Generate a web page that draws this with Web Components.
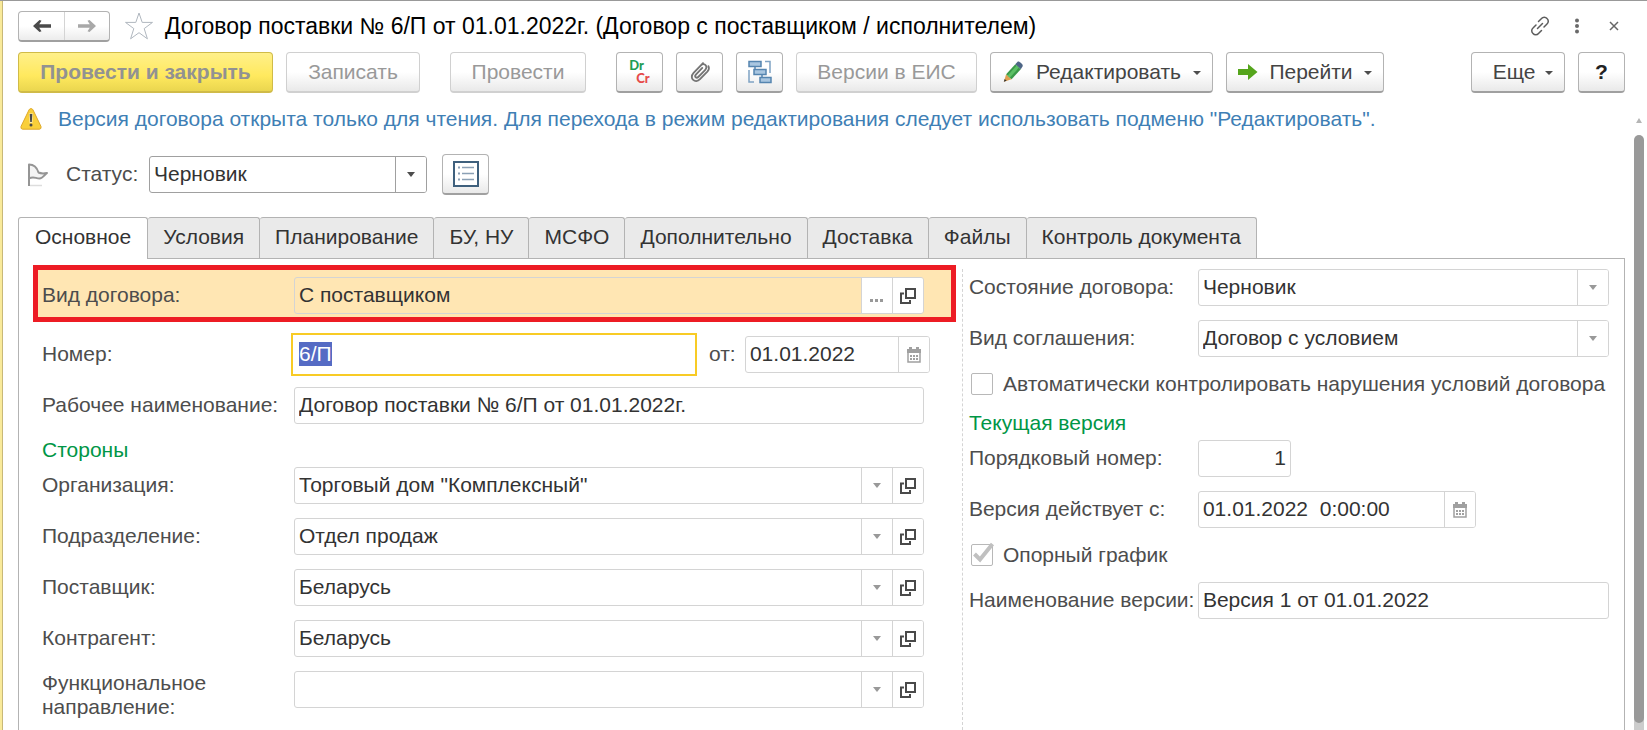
<!DOCTYPE html>
<html lang="ru">
<head>
<meta charset="utf-8">
<title>Договор поставки № 6/П от 01.01.2022г.</title>
<style>
  html, body { margin: 0; height: 100%; background: #fff; }
  body { font: 21px/24px "Liberation Sans", Arial, sans-serif; color: #4d4d4d; overflow: hidden; }
</style>
</head>
<body>
<contract-window></contract-window>

<script>
const ICONS = {
  back: '<svg width="18" height="12" viewBox="0 0 18 12"><path d="M0 6 6.500 0l2 .8-2.300 3.400H18v3.600H6.200l2.300 3.400-2 .8z" fill="#4a4a4a"/></svg>',
  forward: '<svg width="18" height="12" viewBox="0 0 18 12"><path d="M18 6 11.500 0l-2 .8 2.300 3.400H0v3.600h11.800l-2.300 3.400 2 .8z" fill="#a8a8a8"/></svg>',
  star: '<svg width="30" height="30" viewBox="0 0 30 30"><path d="M15 2l3.200 9.400h10.300l-8.300 6.200 3.200 10.200L15 21.700l-8.400 6.100 3.200-10.200-8.300-6.200h10.300z" fill="#fff" stroke="#b0b7bf" stroke-width="1"/></svg>',
  link: '<svg width="20" height="20" viewBox="0 0 20 20" fill="none" stroke="#5c5c5c" stroke-width="1.500" stroke-linecap="round"><path d="M8.500 5.500l3-3a3.600 3.600 0 0 1 5.500 0 3.600 3.600 0 0 1 0 5.500l-3 3M11.500 14.500l-3 3a3.600 3.600 0 0 1-5.500 0 3.600 3.600 0 0 1 0-5.500l3-3M7.500 12.500l5-5"/></svg>',
  dots: '<svg width="6" height="16" viewBox="0 0 6 16" fill="#6a6a6a"><circle cx="3" cy="2.500" r="2"/><circle cx="3" cy="8" r="2"/><circle cx="3" cy="13.500" r="2"/></svg>',
  close: '<svg width="10" height="10" viewBox="0 0 10 10"><path d="M1 1l8 8M9 1l-8 8" stroke="#666" stroke-width="1.500"/></svg>',
  clip: '<svg width="22" height="23" viewBox="0 0 24 25"><path d="M14.500 7.500 7.500 14.800c-2 2.200.6 4.600 2.600 2.600L17.500 9.800c4-4.200-1-8.600-4.800-4.800L5 13c-5.500 6 2 12 7 6.800L20 11.500c1.800-2 2.200-4 1.200-6M5 13 15.300 2.200" fill="none" stroke="#757575" stroke-width="2" stroke-linecap="round"/></svg>',
  tree: '<svg width="24" height="24" viewBox="0 0 24 24" fill="none"><path d="M1 10v12h5M17 1.500h5V13" stroke="#7fa3c4" stroke-width="1.500"/><path d="M7 6v6h3M14 15v5h2" stroke="#5585b0" stroke-width="1.500"/><g fill="#a9c6e0" stroke="#5585b0" stroke-width="1.500"><rect x="1" y="1.500" width="12" height="5"/><rect x="6" y="9.500" width="12" height="5"/><rect x="12" y="17.500" width="11" height="5"/></g></svg>',
  pencil: '<svg width="22" height="22" viewBox="0 0 22 24"><path d="M1 22.500 3.500 14.500l6 5.500z" fill="#e0a050"/><path d="M1 22.500l.9-3 2.200 2z" fill="#333"/><path d="M3.500 14.500 13.500 3.500l6 5.500L9.500 20z" fill="#3a9a48"/><path d="M5 16 15 5l2.500 2.200L7.500 18.200z" fill="#5cc065"/><path d="M13.500 3.500l2.500-2.700c1.500-1.200 6.500 3 5.500 4.900L19.500 9z" fill="#4d6585"/></svg>',
  go: '<svg width="20" height="16" viewBox="0 0 20 16"><path d="M0 5h10V0l9.500 8L10 16v-5H0z" fill="#55a51c"/></svg>',
  caret: '<svg width="8" height="4" viewBox="0 0 8 4"><path d="M0 0h8L4 4z" fill="#4d4d4d"/></svg>',
  warn: '<svg width="22" height="22" viewBox="0 0 22 22"><path d="M9.200 1.500q1.800-2 3.600 0L21 18.500q.5 2.500-1.500 2.700H2.500q-2-.2-1.500-2.700z" fill="#f9cf3a" stroke="#dfa92a" stroke-width="1"/><path d="M9 5.500h4l-.6 9.500H9.600z" fill="#fff" opacity=".6"/><path d="M9.700 6h2.600l-.5 8h-1.600z" fill="#4a4a4a"/><circle cx="11" cy="17" r="1.500" fill="#4a4a4a"/></svg>',
  flag: '<svg width="24" height="24" viewBox="0 0 24 24"><path d="M4 22.500h12" stroke="#ddd" stroke-width="1.500"/><path d="M3 23V1.500c5 0 8 3 9.500 8 3 1.500 6 1 8.500.5-2.500 2-4.500 5.500-7.500 5.500-4 0-6-2.500-10.500 0" fill="#f4f4f4" stroke="#959595" stroke-width="2" stroke-linejoin="round"/></svg>',
  list: '<svg width="26" height="26" viewBox="0 0 26 26"><rect x="1" y="1" width="24" height="24" fill="#fff" stroke="#3f607d" stroke-width="2"/><path d="M9 6.500h12M9 12.500h12M9 18.500h12" stroke="#8ba0b5" stroke-width="1.500"/><path d="M5 6.500h2M5 12.500h2M5 18.500h2" stroke="#8ba0b5" stroke-width="2"/></svg>',
  arrow: '<svg width="8" height="5" viewBox="0 0 8 5"><path d="M0 0h8L4 5z" fill="currentColor"/></svg>',
  open: '<svg width="16" height="16" viewBox="0 0 16 16" fill="none" stroke="#4a4a4a" stroke-width="2"><path d="M6 1h9v9H6zM4 5.500H1V15h9v-3"/></svg>',
  calendar: '<svg width="14" height="16" viewBox="0 0 14 16"><path d="M1 3h12v12H1z" fill="none" stroke="#a0a0a0" stroke-width="1.500"/><path d="M0 2h14v4H0zM2 0h3v3H2zM9 0h3v3H9z" fill="#a0a0a0"/><path d="M3 9h2M6 9h2M9 9h2M3 12h2M6 12h2M9 12h2" stroke="#a0a0a0" stroke-width="2"/></svg>',
  more: '<svg width="13" height="12" viewBox="0 0 13 12" fill="#999"><path d="M0 9h3v3H0zM5 9h3v3H5zM10 9h3v3h-3z"/></svg>'
};

class BaseElement extends HTMLElement {
  connectedCallback() {
    if (this.shadowRoot) return;
    this.attachShadow({ mode: 'open' }).innerHTML =
      '<style>*{box-sizing:border-box}svg{display:block;flex:none}button,input,select{font:inherit;color:inherit;margin:0}</style>' + this.render();
    this.ready();
  }
  ready() {}
}

customElements.define('push-button', class extends BaseElement {
  render() {
    const icon = this.getAttribute('icon');
    const off = this.hasAttribute('off');
    return `<style>
      :host { display: block; flex: none; }
      button { display: flex; align-items: center; justify-content: center; width: 100%; height: 41px; padding: 0 20px;
        border: 1px solid #b3b3b3; border-bottom: 2px solid #a0a0a0; border-radius: 4px; white-space: nowrap;
        background: linear-gradient(#fff 50%, #e9e9e9); color: #444; }
      button:disabled { color: #999; border-color: #d0d0d0; }
      :host([primary]) button { font-weight: bold; color: #929292; border-color: #d0bb48; background: linear-gradient(#fff08a, #ffe95e 60%, #ead64f); }
      :host([square]) button { padding: 0; width: 47px; }
      :host([menu]) button { padding: 0 11px; }
      .text { flex: 1; text-align: center; }
      :host([square]) .text { flex: none; font-weight: bold; color: #222; }
      svg:last-child { margin-top: 2px; }
      :host([square]) svg { margin: 0; }
      .drcr { display: grid; font: bold 13px/13px Lato, sans-serif; color: #1f9d55; text-align: left; }
      .drcr b + b { color: #e64b4b; padding-left: 7px; }
    </style>
    <button type="button" ${off ? 'disabled' : ''} aria-label="${this.getAttribute('name') || this.textContent.trim()}">${
      icon === 'drcr' ? '<span class="drcr"><b>Dr</b><b>Cr</b></span>' : icon ? ICONS[icon] : ''}${
      this.textContent.trim() ? '<span class="text"><slot></slot></span>' : ''}${
      this.hasAttribute('menu') ? ICONS.caret : ''}</button>`;
  }
});

customElements.define('title-bar', class extends BaseElement {
  render() {
    return `<style>
      :host { display: flex; align-items: center; height: 30px; }
      .nav { display: flex; height: 31px; border: 1px solid #b3b3b3; border-bottom: 2px solid #a0a0a0; border-radius: 4px; background: linear-gradient(#fff 50%, #ececec); }
      button { display: grid; place-items: center; border: 0; background: none; padding: 0; }
      .nav button { width: 45px; }
      .nav button + button { border-left: 1px solid #d4d4d4; }
      .star { margin: 0 11px 0 14px; }
      h1 { margin: 0; flex: 1; font-size: 23px; line-height: 28px; font-weight: normal; color: #000; white-space: nowrap; }
      .tools { display: flex; align-items: center; gap: 17px; padding-right: 1px; }
      .tools button { width: 20px; }
    </style>
    <div class="nav"><button type="button" aria-label="Назад">${ICONS.back}</button><button type="button" aria-label="Вперед">${ICONS.forward}</button></div>
    <button class="star" type="button" aria-label="В избранное">${ICONS.star}</button>
    <h1><slot></slot></h1>
    <div class="tools"><button type="button" aria-label="Ссылка">${ICONS.link}</button><button type="button" aria-label="Меню">${ICONS.dots}</button><button type="button" aria-label="Закрыть">${ICONS.close}</button></div>`;
  }
});

customElements.define('command-bar', class extends BaseElement {
  render() {
    return `<style>
      :host { display: flex; gap: 13px; }
      .w255 { width: 255px; } .w134 { width: 134px; } .w136 { width: 136px; }
      .w181 { width: 181px; } .w223 { width: 223px; } .w158 { width: 158px; } .w94 { width: 94px; }
      .group { margin-left: 17px; }
      .end { margin-left: auto; }
    </style>
    <push-button primary off class="w255">Провести и закрыть</push-button>
    <push-button off class="w134">Записать</push-button>
    <push-button off class="w136 group">Провести</push-button>
    <push-button square icon="drcr" name="Проводки" class="group"></push-button>
    <push-button square icon="clip" name="Файлы"></push-button>
    <push-button square icon="tree" name="Структура"></push-button>
    <push-button off class="w181">Версии в ЕИС</push-button>
    <push-button menu icon="pencil" class="w223">Редактировать</push-button>
    <push-button menu icon="go" class="w158">Перейти</push-button>
    <push-button menu class="w94 end">Еще</push-button>
    <push-button square>?</push-button>`;
  }
});

customElements.define('info-message', class extends BaseElement {
  render() {
    return `<style>
      :host { display: flex; align-items: center; gap: 16px; padding-left: 2px; color: #3f7fb5; white-space: nowrap; }
    </style>${ICONS.warn}<span><slot></slot></span>`;
  }
});

/* Labelled control: text, date, select or reference, with its cell buttons. */
customElements.define('form-field', class extends BaseElement {
  render() {
    const kind = this.getAttribute('kind') || 'text';
    const value = (this.getAttribute('value') || '').replace(/"/g, '&quot;');
    const cells = (this.getAttribute('cells') || '').split(' ').filter(Boolean);
    const names = { calendar: 'Выбрать дату', open: 'Открыть', more: 'Выбрать' };
    const control = kind === 'select'
      ? `<div class="pick"><select id="c"><option>${value}</option></select><span class="cell" aria-hidden="true">${ICONS.arrow}</span></div>`
      : `<input id="c" type="text" value="${value}">`;
    return `<style>
      :host { display: grid; grid-template-columns: var(--label-width, auto) minmax(0, 1fr); align-items: center; }
      :host([tall]) { align-items: start; }
      label { padding-bottom: 2px; }
      :host([tall]) label { padding: 0; }
      .box { display: flex; height: 37px; width: var(--box-width, auto); border: 1px solid var(--edge, #d4d4d4); border-radius: 3px; color: #333; overflow: hidden; }
      input, select { flex: 1; min-width: 0; width: 100%; height: 100%; line-height: 24px; padding: 0 4px 2px; border: 0; outline: 0; background: none; appearance: none; border-radius: 0; color: #333; }
      .pick { flex: 1; display: grid; grid-template-columns: minmax(0, 1fr) 31px; }
      .pick select { grid-area: 1 / 1 / 2 / 3; }
      .pick .cell { grid-area: 1 / 2 / 2 / 3; pointer-events: none; }
      .cell { display: grid; place-items: center; width: 31px; padding: 0; border: 0; border-left: 1px solid var(--edge, #d4d4d4); background: #fff; color: var(--arrow, #999); }
      :host([numeric]) input { text-align: right; }
      :host([current]) .box { border: 2px solid #f8cb25; border-radius: 0; height: 43px; padding: 0 1px 0 2px; margin-left: -3px; }
      ::selection { background: #556bc4; color: #fff; }
    </style>
    <label for="c">${this.getAttribute('label')}</label>
    <div class="box">${control}${cells.map(c => `<button class="cell" type="button" aria-label="${names[c]}">${ICONS[c]}</button>`).join('')}</div>`;
  }
  ready() {
    if (this.hasAttribute('current')) {
      const input = this.shadowRoot.querySelector('input');
      input.focus({ preventScroll: true });
      input.select();
    }
  }
});

customElements.define('check-field', class extends BaseElement {
  render() {
    const on = this.hasAttribute('checked');
    return `<style>
      :host { display: flex; padding: 1px 0; }
      label { display: flex; align-items: center; gap: 10px; white-space: nowrap; padding-left: 2px; }
      input { appearance: none; width: 22px; height: 22px; flex: none; border: 1px solid #b8b8b8; border-radius: 2px; background: #fff; }
      .mark { display: grid; }
      .mark > * { grid-area: 1 / 1; pointer-events: none; }
      .mark > input { pointer-events: auto; }
    </style>
    <label><span class="mark"><input type="checkbox" ${on ? 'checked' : ''}>${
      on ? '<svg width="22" height="22" viewBox="0 0 22 22" overflow="visible"><path d="M3.500 10l5.500 5.500L21.500 0" fill="none" stroke="#c0c0c0" stroke-width="4"/></svg>' : ''}</span><slot></slot></label>`;
  }
});

customElements.define('status-row', class extends BaseElement {
  render() {
    return `<style>
      :host { display: flex; align-items: center; padding-left: 8px; }
      form-field { --label-width: 83px; --edge: #a0a0a0; --arrow: #4d4d4d; width: 361px; margin: 0 15px 0 16px; }
    </style>${ICONS.flag}
    <form-field kind="select" label="Статус:" value="Черновик"></form-field>
    <push-button square icon="list" name="Список"></push-button>`;
  }
});

customElements.define('tab-strip', class extends BaseElement {
  render() {
    const tabs = ['Основное', 'Условия', 'Планирование', 'БУ, НУ', 'МСФО', 'Дополнительно', 'Доставка', 'Файлы', 'Контроль документа'];
    return `<style>
      :host { display: flex; border-bottom: 1px solid #b3b3b3; }
      button { height: 41px; padding: 0 15px 2px; border: 1px solid #b3b3b3; border-width: 1px 1px 0 0; border-radius: 3px 3px 0 0; background: #eaeaea; color: #333; white-space: nowrap; }
      button[aria-selected="true"] { background: #fff; border-left-width: 1px; height: 42px; margin-bottom: -1px; padding: 0 16px 3px; }
    </style>${tabs.map((t, i) => `<button type="button" role="tab" aria-selected="${i === 0}">${t}</button>`).join('')}`;
  }
});

customElements.define('scroll-rail', class extends BaseElement {
  render() {
    return `<style>
      :host { display: flex; flex-direction: column; align-items: center; width: 10px; padding-top: 25px; }
      .track { flex: 1; width: 10px; margin-top: 12px; padding-bottom: 7px; display: flex; border-radius: 5px 5px 0 0; background: linear-gradient(#fff 50%, #ccc 50%); }
      .thumb { flex: 1; border-radius: 5px; background: #999; }
    </style><svg width="6" height="5" viewBox="0 0 6 5"><path d="M0 5h6L3 0z" fill="#b5b5b5"/></svg><div class="track"><div class="thumb"></div></div>`;
  }
});

customElements.define('contract-form', class extends BaseElement {
  render() {
    return `<style>
      :host { display: grid; grid-template-columns: 47fr 33fr; border: 1px solid #b3b3b3; border-width: 0 1px; }
      .left { --label-width: 252px; padding: 6px 38px 0 23px; display: grid; align-content: start; row-gap: 14px; }
      .right { --label-width: 229px; padding-right: 15px; margin-top: 10px; padding-left: 6px; border-left: 1px dashed #d4d4d4; display: grid; align-content: start; row-gap: 14px; }
      .mark { margin: 0 -32px 0 -9px; padding: 7px 27px 3px 4px; border: 5px solid #ed1c24; background: #ffe6b3; }
      .number { display: grid; grid-template-columns: minmax(0, 1fr) auto; column-gap: 12px; align-items: center; margin: -3px -6px -3px 0; }
      .number form-field + form-field { --label-width: 36px; width: 221px; }
      h2 { margin: 0 0 -9px; font: inherit; color: #009646; }
      .date { --box-width: 278px; }
      .short { --box-width: 93px; }
    </style>
    <div class="left">
      <div class="mark"><form-field label="Вид договора:" value="С поставщиком" cells="more open"></form-field></div>
      <div class="number">
        <form-field current label="Номер:" value="6/П"></form-field>
        <form-field label="от:" value="01.01.2022" cells="calendar"></form-field>
      </div>
      <form-field label="Рабочее наименование:" value="Договор поставки № 6/П от 01.01.2022г."></form-field>
      <h2>Стороны</h2>
      <form-field kind="select" label="Организация:" value='Торговый дом "Комплексный"' cells="open"></form-field>
      <form-field kind="select" label="Подразделение:" value="Отдел продаж" cells="open"></form-field>
      <form-field kind="select" label="Поставщик:" value="Беларусь" cells="open"></form-field>
      <form-field kind="select" label="Контрагент:" value="Беларусь" cells="open"></form-field>
      <form-field tall kind="select" label="Функциональное<br>направление:" value="" cells="open"></form-field>
    </div>
    <div class="right">
      <form-field kind="select" label="Состояние договора:" value="Черновик"></form-field>
      <form-field kind="select" label="Вид соглашения:" value="Договор с условием"></form-field>
      <check-field>Автоматически контролировать нарушения условий договора</check-field>
      <h2>Текущая версия</h2>
      <form-field class="short" numeric label="Порядковый номер:" value="1"></form-field>
      <form-field class="date" label="Версия действует с:" value="01.01.2022  0:00:00" cells="calendar"></form-field>
      <check-field checked>Опорный график</check-field>
      <form-field label="Наименование версии:" value="Версия 1 от 01.01.2022"></form-field>
    </div>`;
  }
});

customElements.define('contract-window', class extends BaseElement {
  render() {
    return `<style>
      :host { display: flex; flex-direction: column; height: 100vh; border-top: 1px solid #999; box-sizing: border-box; }
      .frame { flex: 1; min-height: 0; display: flex; flex-direction: column; border-left: 1px solid #c8b878; box-shadow: -2px 0 #f9ea9a; margin-left: 2px; padding-left: 15px; }
      header { display: grid; row-gap: 11px; padding: 10px 22px 0 0; }
      .body { flex: 1; min-height: 0; display: grid; grid-template-columns: minmax(0, 1fr) 10px; column-gap: 9px; padding-right: 3px; }
      .content { display: flex; flex-direction: column; min-height: 0; overflow: hidden; }
      info-message { margin-top: 14px; }
      status-row { margin: 23px 0 22px; }
      contract-form { flex: 1; min-height: 0; }
    </style>
    <div class="frame">
      <header>
        <title-bar>Договор поставки № 6/П от 01.01.2022г. (Договор с поставщиком / исполнителем)</title-bar>
        <command-bar></command-bar>
      </header>
      <div class="body">
        <div class="content">
          <info-message>Версия договора открыта только для чтения. Для перехода в режим редактирования следует использовать подменю "Редактировать".</info-message>
          <status-row></status-row>
          <tab-strip></tab-strip>
          <contract-form></contract-form>
        </div>
        <scroll-rail></scroll-rail>
      </div>
    </div>`;
  }
});
</script>
</body>
</html>
